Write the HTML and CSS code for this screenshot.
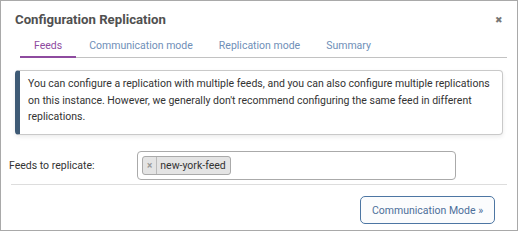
FILE: index.html
```html
<!DOCTYPE html>
<html>
<head>
<meta charset="utf-8">
<link rel="stylesheet" href="styles.css">
</head>
<body>
<div class="dialog">
  <div class="header">
    <h1 class="title">Configuration Replication</h1>
    <span class="close">&#10006;</span>
  </div>
  <div class="tabs">
    <span class="tab active">Feeds</span>
    <span class="tab">Communication mode</span>
    <span class="tab">Replication mode</span>
    <span class="tab">Summary</span>
  </div>
  <div class="alert">You can configure a replication with multiple feeds, and you can also configure multiple replications on this instance. However, we generally don't recommend configuring the same feed in different replications.</div>
  <div class="field">
    <label class="label">Feeds to replicate:</label>
    <div class="select">
      <span class="tag"><span class="tag-x">×</span><span class="tag-text">new-york-feed</span></span>
    </div>
  </div>
  <div class="footer">
    <button class="btn">Communication Mode »</button>
  </div>
</div>
</body>
</html>
```
FILE: styles.css
```css
html, body {
  margin: 0;
  padding: 0;
  background: #fff;
}
body {
  font-family: Roboto, "Liberation Sans", sans-serif;
}
.dialog {
  box-sizing: border-box;
  width: 518px;
  height: 231px;
  border: 1px solid #a9a9a9;
  background: #fff;
}
.header {
  display: flex;
  justify-content: space-between;
  align-items: center;
  padding: 9px 14px 0 14px;
  height: 19px;
}
.title {
  margin: 0;
  font-size: 13.2px;
  font-weight: 700;
  color: #505050;
}
.close {
  font-size: 9px;
  color: #777;
  margin-top: 1px;
}
.tabs {
  display: flex;
  margin: 6px 10px 0 19px;
  height: 22px;
  border-bottom: 1px solid #c2c2c2;
}
.tab {
  padding: 0 13px;
  font-size: 10.5px;
  line-height: 21px;
  color: #6f8fb8;
}
.tab.active {
  padding: 0 14px 0 14px;
  color: #8e4b9f;
  border-bottom: 2px solid #8e4b9f;
  margin-bottom: -1px;
}
.alert {
  margin: 12px 14px 0 14px;
  box-sizing: border-box;
  height: 65px;
  border: 1px solid #c9c9c9;
  border-left: 5px solid #3e5a75;
  border-radius: 4px;
  box-shadow: 0 2px 4px rgba(0,0,0,0.08);
  padding: 5px 12px 0 8px;
  font-size: 10.5px;
  line-height: 16.5px;
  color: #333;
}
.field {
  display: flex;
  align-items: center;
  margin: 16px 0 0 8px;
}
.label {
  width: 128px;
  font-size: 10.5px;
  color: #333;
}
.select {
  box-sizing: border-box;
  width: 319px;
  height: 29px;
  border: 1px solid #aaa;
  border-radius: 4px;
  padding: 4px 4px;
  display: flex;
  align-items: flex-start;
}
.tag {
  display: flex;
  align-items: stretch;
  height: 19px;
  box-sizing: border-box;
  border: 1px solid #aaa;
  border-radius: 3px;
  background: #e4e4e4;
  font-size: 10.5px;
  color: #333;
}
.tag-x {
  display: flex;
  align-items: center;
  padding: 0 4px;
  color: #999;
  font-size: 10px;
  font-weight: 700;
  border-right: 1px solid #bbb;
}
.tag-text {
  display: flex;
  align-items: center;
  padding: 0 4px 0 3px;
}
.footer {
  margin: 4px 10px 0 10px;
  border-top: 1px solid #ddd;
  display: flex;
  justify-content: flex-end;
  padding: 11px 12px 0 0;
}
.btn {
  box-sizing: border-box;
  width: 135px;
  height: 28px;
  border: 1px solid #4d76a3;
  border-radius: 5px;
  background: #fbfcfd;
  font-family: Roboto, "Liberation Sans", sans-serif;
  font-size: 10.5px;
  color: #4d6f9a;
  padding: 0;
}
```
